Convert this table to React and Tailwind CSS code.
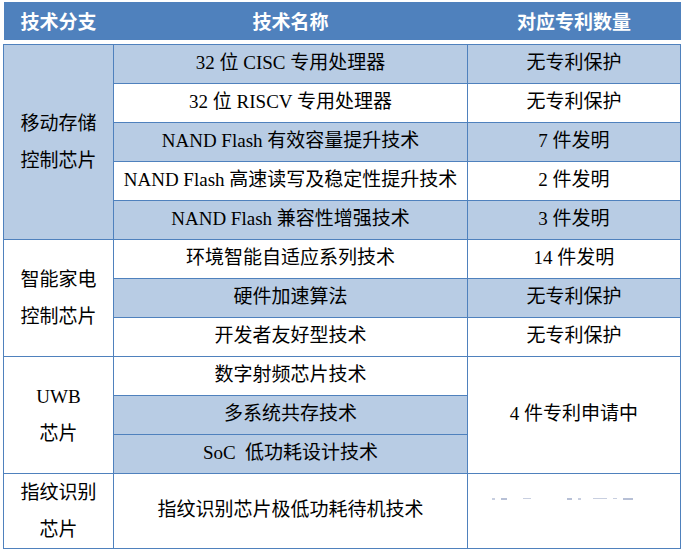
import React from "react";

const BLUE = "bg-[#b8cce4]";

const rows = [
  { name: "32 位 CISC 专用处理器", nameBg: BLUE, count: "无专利保护", countBg: BLUE },
  { name: "32 位 RISCV 专用处理器", nameBg: "bg-white", count: "无专利保护", countBg: "bg-white" },
  { name: "NAND Flash 有效容量提升技术", nameBg: BLUE, count: "7 件发明", countBg: BLUE },
  { name: "NAND Flash 高速读写及稳定性提升技术", nameBg: "bg-white", count: "2 件发明", countBg: "bg-white" },
  { name: "NAND Flash 兼容性增强技术", nameBg: BLUE, count: "3 件发明", countBg: BLUE },
  { name: "环境智能自适应系列技术", nameBg: "bg-white", count: "14 件发明", countBg: "bg-white" },
  { name: "硬件加速算法", nameBg: BLUE, count: "无专利保护", countBg: BLUE },
  { name: "开发者友好型技术", nameBg: "bg-white", count: "无专利保护", countBg: "bg-white" },
  { name: "数字射频芯片技术", nameBg: "bg-white" },
  { name: "多系统共存技术", nameBg: BLUE },
  { name: "SoC  低功耗设计技术", nameBg: BLUE },
];

const cell = "border border-[#4f81bd] text-center align-middle p-0";

function Group({ lines, bg, span }) {
  return (
    <td rowSpan={span} className={`${cell} ${bg} leading-[37px]`}>
      {lines.map((l) => (
        <div key={l}>{l}</div>
      ))}
    </td>
  );
}

export default function App() {
  return (
    <div className="w-[684px] h-[552px] bg-white pt-[2px] pl-[3px] font-['Liberation_Serif','Noto_Sans_CJK_SC',serif] text-[19px] text-black">
      <table className="border-collapse table-fixed w-[677px]">
        <colgroup>
          <col className="w-[110px]" />
          <col className="w-[354px]" />
          <col className="w-[213px]" />
        </colgroup>
        <thead>
          <tr className="h-[38px] bg-[#4f81bd] text-white font-['Noto_Sans_CJK_SC',sans-serif] text-[19px] font-bold">
            <th className="p-0 font-bold">技术分支</th>
            <th className="p-0 font-bold">技术名称</th>
            <th className="p-0 font-bold">对应专利数量</th>
          </tr>
          <tr className="h-[4px] bg-white">
            <th className="p-0" />
            <th className="p-0" />
            <th className="p-0" />
          </tr>
        </thead>
        <tbody>
          {rows.map((r, i) => (
            <tr key={r.name} className="h-[39px]">
              {i === 0 && <Group span={5} bg={BLUE} lines={["移动存储", "控制芯片"]} />}
              {i === 5 && <Group span={3} bg="bg-white" lines={["智能家电", "控制芯片"]} />}
              {i === 8 && <Group span={3} bg="bg-white" lines={["UWB", "芯片"]} />}
              <td className={`${cell} ${r.nameBg} whitespace-pre`}>{r.name}</td>
              {r.count && <td className={`${cell} ${r.countBg}`}>{r.count}</td>}
              {i === 8 && (
                <td rowSpan={3} className={`${cell} bg-white`}>
                  4 件专利申请中
                </td>
              )}
            </tr>
          ))}
          <tr className="h-[75px]">
            <Group span={1} bg="bg-white" lines={["指纹识别", "芯片"]} />
            <td className={`${cell} bg-white`}>指纹识别芯片极低功耗待机技术</td>
            <td className={`${cell} bg-white`}>
              <div className="flex items-center gap-[6px] pl-[24px] h-[4px] -mt-[14px]">
                <span className="w-[3px] h-[2px] bg-[#c8cfe0]" />
                <span className="w-[6px] h-[2px] bg-[#b7c0d6]" />
                <span className="w-[8px] h-[1px] bg-[#c8cfe0] ml-[10px]" />
                <span className="w-[5px] h-[2px] bg-[#b7c0d6] ml-[30px]" />
                <span className="w-[3px] h-[2px] bg-[#c8cfe0]" />
                <span className="w-[14px] h-[1px] bg-[#c8cfe0] ml-[6px]" />
                <span className="w-[4px] h-[1px] bg-[#c8cfe0]" />
                <span className="w-[10px] h-[2px] bg-[#b7c0d6]" />
              </div>
            </td>
          </tr>
        </tbody>
      </table>
    </div>
  );
}
